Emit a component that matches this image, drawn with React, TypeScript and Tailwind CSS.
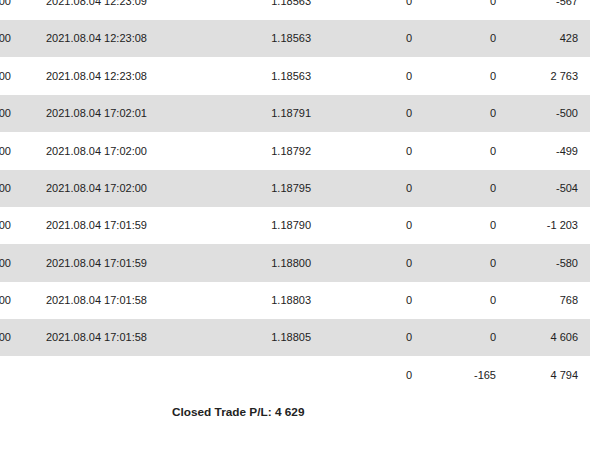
type Row = {
  lots: string;
  time: string;
  price: string;
  commission: string;
  swap: string;
  profit: string;
};

const rows: Row[] = [
  { lots: "1.00", time: "2021.08.04 12:23:09", price: "1.18563", commission: "0", swap: "0", profit: "-567" },
  { lots: "1.00", time: "2021.08.04 12:23:08", price: "1.18563", commission: "0", swap: "0", profit: "428" },
  { lots: "1.00", time: "2021.08.04 12:23:08", price: "1.18563", commission: "0", swap: "0", profit: "2 763" },
  { lots: "1.00", time: "2021.08.04 17:02:01", price: "1.18791", commission: "0", swap: "0", profit: "-500" },
  { lots: "1.00", time: "2021.08.04 17:02:00", price: "1.18792", commission: "0", swap: "0", profit: "-499" },
  { lots: "1.00", time: "2021.08.04 17:02:00", price: "1.18795", commission: "0", swap: "0", profit: "-504" },
  { lots: "1.00", time: "2021.08.04 17:01:59", price: "1.18790", commission: "0", swap: "0", profit: "-1 203" },
  { lots: "1.00", time: "2021.08.04 17:01:59", price: "1.18800", commission: "0", swap: "0", profit: "-580" },
  { lots: "1.00", time: "2021.08.04 17:01:58", price: "1.18803", commission: "0", swap: "0", profit: "768" },
  { lots: "1.00", time: "2021.08.04 17:01:58", price: "1.18805", commission: "0", swap: "0", profit: "4 606" },
];

function TradeRow({ row, shaded }: { row: Row; shaded: boolean }) {
  return (
    <div className={`flex h-[37.375px] w-[590px] items-center ${shaded ? "bg-[#dfdfdf]" : "bg-white"}`}>
      <div className="flex w-[23px] shrink-0 justify-end overflow-hidden whitespace-nowrap pr-[12px]">
        {row.lots}
      </div>
      <div className="w-[160px] shrink-0 whitespace-nowrap pl-[23px]">{row.time}</div>
      <div className="w-[140px] shrink-0 pr-[12px] text-right">{row.price}</div>
      <div className="w-[101px] shrink-0 pr-[12px] text-right">{row.commission}</div>
      <div className="w-[84px] shrink-0 pr-[12px] text-right">{row.swap}</div>
      <div className="w-[82px] shrink-0 whitespace-nowrap pr-[12px] text-right">{row.profit}</div>
    </div>
  );
}

export default function App() {
  return (
    <div
      className="h-[449px] w-[600px] overflow-hidden bg-white text-[11px] text-[#222]"
      style={{ fontFamily: '"Liberation Sans", Arial, sans-serif' }}
    >
      <div className="-mt-[17.375px]">
        {rows.map((row, i) => (
          <TradeRow key={i} row={row} shaded={i % 2 === 1} />
        ))}
        <div className="flex h-[37.375px] w-[590px] items-center">
          <div className="w-[23px] shrink-0" />
          <div className="w-[160px] shrink-0" />
          <div className="w-[140px] shrink-0" />
          <div className="w-[101px] shrink-0 pr-[12px] text-right">0</div>
          <div className="w-[84px] shrink-0 pr-[12px] text-right">-165</div>
          <div className="w-[82px] shrink-0 whitespace-nowrap pr-[12px] text-right">4 794</div>
        </div>
      </div>
      <div className="pl-[172px] pt-[10px] text-[11.8px] font-bold leading-[16px]">Closed Trade P/L: 4 629</div>
    </div>
  );
}
